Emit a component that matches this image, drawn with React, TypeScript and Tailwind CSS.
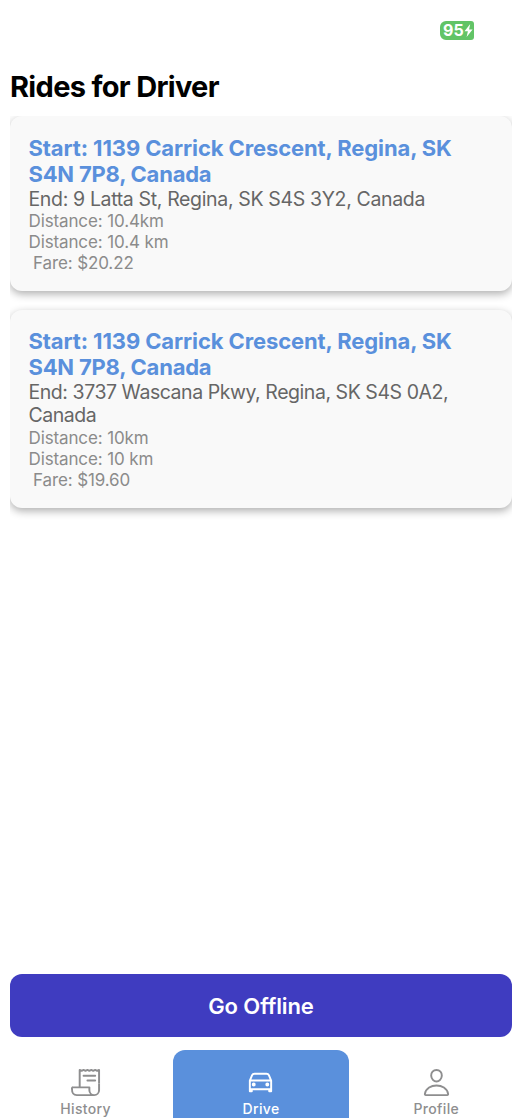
import type { ReactNode } from "react";
import { IoCarOutline, IoPersonOutline, IoReceiptOutline } from "react-icons/io5";

interface Ride {
  start: string[];
  end: string[];
  endTracking: string;
  distance: string;
  fare: string;
}

const rides: Ride[] = [
  {
    start: ["Start: 1139 Carrick Crescent, Regina, SK", "S4N 7P8, Canada"],
    end: ["End: 9 Latta St, Regina, SK S4S 3Y2, Canada"],
    endTracking: "tracking-[-0.35px]",
    distance: "10.4",
    fare: "$20.22",
  },
  {
    start: ["Start: 1139 Carrick Crescent, Regina, SK", "S4N 7P8, Canada"],
    end: ["End: 3737 Wascana Pkwy, Regina, SK S4S 0A2,", "Canada"],
    endTracking: "tracking-[-0.45px]",
    distance: "10",
    fare: "$19.60",
  },
];

function RideCard({ ride }: { ride: Ride }) {
  return (
    <article className="rounded-[12px] bg-[#f9f9f9] px-[18.5px] pt-[18.5px] pb-[17.5px] whitespace-nowrap shadow-[0_3px_9px_rgba(0,0,0,0.32)]">
      <h2 className="text-[22px] leading-[26px] font-bold tracking-[-0.11px] text-[#5a90dc]">
        {ride.start.map((line) => (
          <span key={line} className="block last:tracking-[-0.22px]">{line}</span>
        ))}
      </h2>
      <p className={`pt-[1px] text-[19.5px] leading-[23.3px] text-[#666] ${ride.endTracking}`}>
        {ride.end.map((line) => (
          <span key={line} className="block">{line}</span>
        ))}
      </p>
      <div className="text-[17px] leading-[21px] tracking-[-0.12px] text-[#8b8b8b]">
        <p>Distance: {ride.distance}km</p>
        <p>Distance: {ride.distance} km</p>
        <p className="pl-[4.5px]">Fare: {ride.fare}</p>
      </div>
    </article>
  );
}

function Tab({ icon, label, active = false }: { icon: ReactNode; label: string; active?: boolean }) {
  return (
    <button
      className={
        active
          ? "flex h-full w-[175.5px] flex-col items-center rounded-t-[12px] bg-[#5a90dc] pt-[17px] text-white"
          : "flex h-full w-[175.5px] flex-col items-center pt-[17px] text-[#8e8e8f]"
      }
    >
      {icon}
      <span className="mt-[2px] text-[14px] leading-[18px] font-medium tracking-[0.35px]">{label}</span>
    </button>
  );
}

export default function App() {
  return (
    <div className="flex h-[1118px] w-[516px] flex-col overflow-hidden bg-white font-['Inter',sans-serif]">
      <div className="flex h-[61px] shrink-0 items-start justify-end pt-[21px] pr-[42px]">
        <div className="flex h-[19px] w-[34px] items-center rounded-l-[6px] rounded-r-[3px] bg-[#62c466] pl-[3px] text-white">
          <span className="text-[16px] leading-[19px] font-bold">95</span>
          <svg className="h-[13px] w-[9px] shrink-0" viewBox="0 0 9 13" fill="currentColor">
            <path d="M6.2 0 0.5 7.2h3.4L2.6 13 8.6 5.4H5.1z" />
          </svg>
        </div>
      </div>
      <h1 className="h-[55px] shrink-0 pt-[8px] pl-[10px] text-[29px] leading-[36px] font-bold tracking-[-0.68px] text-black">
        Rides for Driver
      </h1>
      <main className="mr-[4px] ml-[10px] flex h-[846px] shrink-0 flex-col gap-[18.4px] overflow-hidden">
        {rides.map((ride) => (
          <RideCard key={ride.fare} ride={ride} />
        ))}
      </main>
      <button className="mt-[12px] mr-[4px] ml-[10px] h-[63px] shrink-0 rounded-[12px] bg-[#3f3cc0] pt-[2px] text-[22px] font-semibold tracking-[-0.1px] text-white">
        Go Offline
      </button>
      <nav className="mt-[12.5px] ml-[-2px] flex h-[69px] w-[526px] shrink-0">
        <Tab icon={<IoReceiptOutline className="size-[31px]" />} label="History" />
        <Tab icon={<IoCarOutline className="size-[31px]" />} label="Drive" active />
        <Tab icon={<IoPersonOutline className="size-[31px]" />} label="Profile" />
      </nav>
    </div>
  );
}
